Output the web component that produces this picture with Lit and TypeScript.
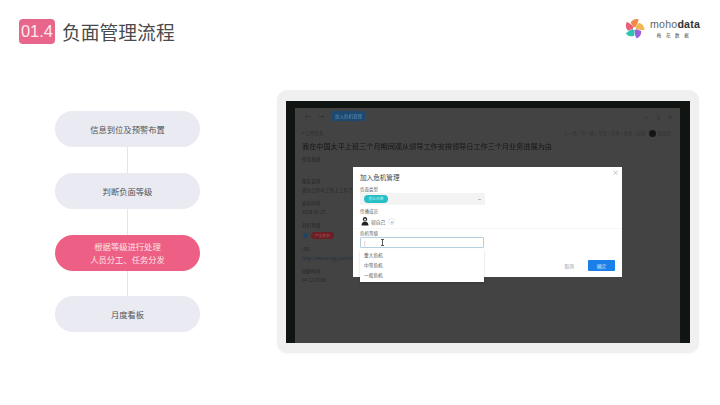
import { LitElement, html, css, svg } from 'lit'
import { customElement } from 'lit/decorators.js'

const STEPS = [
  { lines: ['信息到位及预警布置'] },
  { lines: ['判断负面等级'] },
  { lines: ['根据等级进行处理', '人员分工、任务分发'], active: true },
  { lines: ['月度看板'] },
]

const PETALS = [
  { color: '#f08a4b', rotate: 0 },
  { color: '#f2b84f', rotate: 72 },
  { color: '#9a62d8', rotate: 144 },
  { color: '#2fc3b4', rotate: 216 },
  { color: '#ec5f78', rotate: 288 },
]

const logo = svg`
  <svg class="mark" viewBox="-11 -11 22 22" aria-hidden="true">
    ${PETALS.map(
      (p) => svg`<path d="M0 0 L-4.2 -6.2 Q-1 -11 4.4 -9.6 Q3.6 -4 0 0Z" fill=${p.color} transform="rotate(${p.rotate})" />`
    )}
    <circle r="1.7" fill="#fff" />
  </svg>
`

@customElement('app-root')
export class AppRoot extends LitElement {
  static styles = css`
    :host {
      display: block;
      width: 720px;
      height: 405px;
      overflow: hidden;
      background: #fff;
      font-family: 'Noto Sans CJK SC', 'Noto Sans', sans-serif;
      color: #444;
    }

    .header {
      display: flex;
      align-items: center;
      height: 25px;
      padding: 19px 19px 0;
    }

    .badge {
      width: 36px;
      height: 25px;
      border-radius: 4px;
      background: #e8668b;
      color: #fde9ef;
      font-family: 'Liberation Sans', sans-serif;
      font-size: 16.5px;
      line-height: 25px;
      text-align: center;
    }

    .title {
      margin-left: 7px;
      font-size: 18.8px;
      line-height: 25px;
      font-weight: 400;
      color: #4a4a4a;
    }

    .brand {
      margin-left: auto;
      margin-right: 1px;
      display: flex;
      align-items: center;
      gap: 5px;
      margin-top: -7px;
    }

    .mark {
      width: 21px;
      height: 21px;
      display: block;
    }

    .brand-name {
      font-family: 'Liberation Sans', sans-serif;
      font-size: 10.6px;
      line-height: 11px;
      letter-spacing: 0.2px;
      color: #666;
    }

    .brand-name b {
      color: #333;
    }

    .brand-sub {
      font-size: 4.5px;
      line-height: 6px;
      margin-top: 2px;
      letter-spacing: 4.6px;
      text-align: center;
      color: #444;
    }

    .main {
      display: flex;
      align-items: flex-start;
      padding: 46px 0 0 55px;
    }

    .steps {
      display: flex;
      flex-direction: column;
      align-items: center;
      width: 145px;
      margin-top: 21px;
    }

    .step {
      width: 145px;
      height: 36px;
      border-radius: 18px;
      background: #e9eaf2;
      display: flex;
      flex-direction: column;
      align-items: center;
      justify-content: center;
      font-size: 8.3px;
      line-height: 13px;
      color: #555;
    }

    .step.active {
      background: #ee5f85;
      color: #fbe3ea;
    }

    .link {
      width: 1px;
      height: 26px;
      background: #e4e4e8;
    }

    .link.short {
      height: 25px;
    }

    .card {
      margin-left: 77px;
      width: 404px;
      height: 241px;
      padding: 11px 9px 11px 9px;
      background: #f0f0f0;
      border-radius: 10px;
      box-shadow: 0 1px 3px rgba(0, 0, 0, 0.03);
    }

    .screen {
      position: relative;
      height: 242px;
      background: #111511;
      padding: 7px 10px 0 9px;
      box-sizing: border-box;
    }

    .app {
      height: 235px;
      background: #434343;
      color: #1d1d1d;
      box-sizing: border-box;
      padding: 3px 0 0 7px;
      overflow: hidden;
      filter: blur(0.3px);
    }

    .topbar {
      display: flex;
      align-items: center;
      height: 10px;
      padding-left: 3px;
      color: #2b2b2b;
      font-size: 6px;
    }

    .nav {
      width: 24px;
      letter-spacing: 3px;
    }

    .topbtn {
      width: 33px;
      height: 10px;
      margin-left: 3px;
      border-radius: 1px;
      background: #1d4870;
      color: #5f8fb8;
      font-size: 4.5px;
      line-height: 10px;
      text-align: center;
    }

    .winctl {
      margin-left: auto;
      margin-right: 7px;
      display: flex;
      gap: 7px;
      color: #2a2a2a;
      font-size: 6px;
    }

    .crumbs {
      display: flex;
      justify-content: space-between;
      margin-top: 8px;
      height: 8px;
      font-size: 4.5px;
      line-height: 8px;
      color: #2c2c2c;
    }

    .crumb-right {
      display: flex;
      align-items: center;
      gap: 2px;
      margin-right: 9px;
      color: #333;
    }

    .me {
      width: 7px;
      height: 7px;
      border-radius: 50%;
      background: #151515;
      margin-left: 1px;
    }

    .heading {
      margin-top: 3px;
      font-size: 7.15px;
      line-height: 12px;
      white-space: nowrap;
      color: #151515;
    }

    .field {
      width: fit-content;
      font-size: 4.6px;
      line-height: 9px;
      color: #262626;
      white-space: nowrap;
    }

    .label {
      margin-top: 4px;
      height: 9px;
    }

    .label.first {
      margin-top: 3px;
    }

    .label.gap {
      margin-top: 13px;
    }

    .label.wide {
      margin-top: 5px;
    }

    .status {
      display: flex;
      align-items: center;
      gap: 3px;
      height: 10px;
      margin-left: 1px;
    }

    .dot {
      width: 5px;
      height: 5px;
      border-radius: 50%;
      background: #1f4468;
    }

    .pill {
      width: 23px;
      height: 7px;
      border-radius: 4px;
      background: #6b1f24;
      color: #a8545a;
      font-size: 3.8px;
      line-height: 7px;
      text-align: center;
    }

    .url {
      color: #1f2f3f;
    }

    .modal {
      position: absolute;
      left: 67px;
      top: 66px;
      width: 269px;
      height: 110px;
      box-sizing: border-box;
      padding: 6px 7px 0;
      background: #fff;
      color: #555;
    }

    .close {
      position: absolute;
      right: 3px;
      top: 1px;
      font-size: 7px;
      line-height: 8px;
      color: #aaa;
    }

    .modal h2 {
      margin: 0;
      font-size: 6.6px;
      line-height: 9px;
      font-weight: 400;
      color: #444;
    }

    .modal label {
      display: block;
      font-size: 4.5px;
      line-height: 6px;
      color: #666;
    }

    .select {
      display: flex;
      align-items: center;
      width: 125px;
      height: 12px;
      margin-top: 1px;
      padding: 0 4px;
      box-sizing: border-box;
      background: #f3f3f3;
      border-radius: 1px;
    }

    .tag {
      width: 24px;
      height: 8px;
      border-radius: 4px;
      background: #27bfc4;
      color: #bdeced;
      font-size: 3.8px;
      line-height: 8px;
      text-align: center;
    }

    .chev {
      margin-left: auto;
      width: 3px;
      height: 1px;
      background: #bbb;
    }

    .member {
      display: flex;
      align-items: center;
      height: 12px;
      margin: 1px 0 3px 1px;
      font-size: 4.8px;
      color: #555;
    }

    .person {
      width: 8px;
      height: 10px;
      margin-right: 2px;
    }

    .plus {
      width: 7px;
      height: 7px;
      margin-left: 3px;
      border: 1px solid #e6e6e6;
      border-radius: 50%;
      box-sizing: border-box;
      font-size: 5px;
      line-height: 5px;
      text-align: center;
      color: #555;
    }

    .input {
      display: flex;
      align-items: center;
      position: relative;
      width: 124px;
      height: 11px;
      margin-top: 1px;
      padding-left: 3px;
      box-sizing: border-box;
      border: 1px solid #b4d0e0;
      border-radius: 1px;
      font-size: 5px;
      color: #888;
    }

    .ibeam {
      position: absolute;
      left: 20px;
      top: 1px;
      width: 3px;
      height: 7px;
    }

    .menu {
      position: absolute;
      left: 7px;
      top: 83px;
      width: 124px;
      height: 32px;
      background: #fff;
      box-shadow: 0 1px 2px rgba(0, 0, 0, 0.18);
      box-sizing: border-box;
      font-size: 4.7px;
      color: #555;
    }

    .menu div {
      height: 10px;
      line-height: 10px;
      padding-left: 4px;
    }

    .divider {
      position: absolute;
      left: 0;
      right: 0;
      top: 61px;
      height: 1px;
      background: #f7f7f7;
    }

    .actions {
      position: absolute;
      right: 7px;
      top: 93px;
      display: flex;
      align-items: center;
      gap: 14px;
      font-size: 4.8px;
      color: #999;
    }

    .ok {
      width: 27px;
      height: 11px;
      background: #1a7fe8;
      border-radius: 1px;
      color: #d6e8fb;
      line-height: 11px;
      text-align: center;
    }
  `

  render() {
    return html`
      <header class="header">
        <div class="badge">01.4</div>
        <div class="title">负面管理流程</div>
        <div class="brand">
          ${logo}
          <div>
            <div class="brand-name">moho<b>data</b></div>
            <div class="brand-sub">梅花数据</div>
          </div>
        </div>
      </header>
      <main class="main">
        <div class="steps">
          ${STEPS.map(
            (s, i) => html`
              ${i > 0 ? html`<div class="link ${i === 3 ? 'short' : ''}"></div>` : ''}
              <div class="step ${s.active ? 'active' : ''}">
                ${s.lines.map((l) => html`<div>${l}</div>`)}
              </div>
            `
          )}
        </div>
        <section class="card">
          <div class="screen">
            <div class="app">
              <div class="topbar">
                <span class="nav">← →</span>
                <div class="topbtn">加入危机管理</div>
                <div class="winctl"><span>—</span><span>▯</span><span>×</span></div>
              </div>
              <div class="crumbs">
                <span>&lt; 工作任务</span>
                <span class="crumb-right">上一条 / 下一条 / 关注 / 分享 / 更多 / 编辑<i class="me"></i>周周周</span>
              </div>
              <div class="heading">我在中国太平上班三个月期间观从领导工作安排领导日工作三个月业务进展为由</div>
              <div class="field label first">任务描述</div>
              <div class="field label gap">报告说明</div>
              <div class="field">视为工作中工作上工作了工作</div>
              <div class="field label">发布时间</div>
              <div class="field">2020-01-27</div>
              <div class="field label">危机等级</div>
              <div class="status"><i class="dot"></i><div class="pill">严重危机</div></div>
              <div class="field label wide">URL</div>
              <div class="field url">http://weixin.qq.com/s/article</div>
              <div class="field label">创建时间</div>
              <div class="field">04 12:27:00</div>
            </div>
            <div class="modal">
              <span class="close">×</span>
              <h2>加入危机管理</h2>
              <label style="margin-top: 4px">负面类型</label>
              <div class="select"><div class="tag">舆论风暴</div><i class="chev"></i></div>
              <label style="margin-top: 3px">传播成员</label>
              <div class="member">
                <svg class="person" viewBox="0 0 9 10" aria-hidden="true">
                  <circle cx="4.5" cy="3" r="2.4" fill="#222" />
                  <path d="M0.5 10 Q1 5.6 4.5 5.6 Q8 5.6 8.5 10Z" fill="#222" />
                  <circle cx="4.5" cy="3.4" r="1.3" fill="#e8d8c8" />
                </svg>
                <span>宿自己</span>
                <span class="plus">+</span>
              </div>
              <label>危机等级</label>
              <div class="input">
                <span>|</span>
                <svg class="ibeam" viewBox="0 0 3 7" aria-hidden="true">
                  <path d="M0 .5H3M1.5 .5V6.5M0 6.5H3" stroke="#333" stroke-width=".8" fill="none" />
                </svg>
              </div>
              <div class="divider"></div>
              <div class="menu">
                <div>重大危机</div>
                <div>中等危机</div>
                <div>一般危机</div>
              </div>
              <div class="actions"><span>取消</span><div class="ok">确定</div></div>
            </div>
          </div>
        </section>
      </main>
    `
  }
}
